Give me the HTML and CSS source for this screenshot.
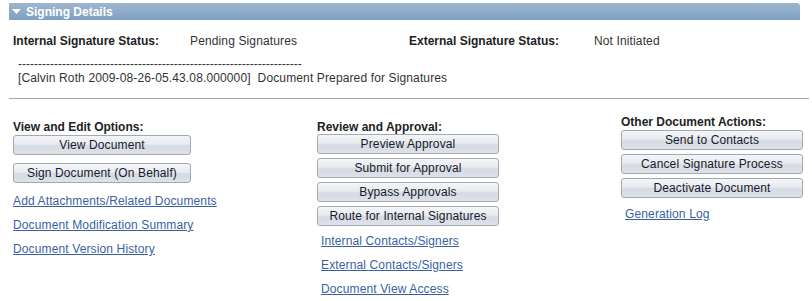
FILE: index.html
```html
<!DOCTYPE html>
<html>
<head>
<meta charset="utf-8">
<link rel="stylesheet" href="styles.css">
</head>
<body>
<div class="panel">
  <div class="header">
    <svg class="tri" width="9" height="6" viewBox="0 0 9 6"><polygon points="0,0 9,0 4.5,5" fill="#ffffff"/></svg>
    <span>Signing Details</span>
  </div>
  <div class="status">
    <span class="lbl c1">Internal Signature Status:</span>
    <span class="val c2">Pending Signatures</span>
    <span class="lbl c3">External Signature Status:</span>
    <span class="val c4">Not Initiated</span>
  </div>
  <div class="log">
    <div class="dashes">-----------------------------------------------------------------------</div>
    <div class="entry">[Calvin Roth 2009-08-26-05.43.08.000000]&nbsp; Document Prepared for Signatures</div>
  </div>
  <div class="rule"></div>
  <div class="actions">
    <div class="col col-a">
      <div class="lbl">View and Edit Options:</div>
      <div class="btns btns-wide">
        <button class="btn narrow">View Document</button>
        <button class="btn narrow">Sign Document (On Behalf)</button>
      </div>
      <div class="links">
        <a href="#">Add Attachments/Related Documents</a>
        <a href="#">Document Modification Summary</a>
        <a href="#">Document Version History</a>
      </div>
    </div>
    <div class="col col-b">
      <div class="lbl">Review and Approval:</div>
      <div class="btns">
        <button class="btn">Preview Approval</button>
        <button class="btn">Submit for Approval</button>
        <button class="btn">Bypass Approvals</button>
        <button class="btn">Route for Internal Signatures</button>
      </div>
      <div class="links indent">
        <a href="#">Internal Contacts/Signers</a>
        <a href="#">External Contacts/Signers</a>
        <a href="#">Document View Access</a>
      </div>
    </div>
    <div class="col col-c">
      <div class="lbl">Other Document Actions:</div>
      <div class="btns">
        <button class="btn">Send to Contacts</button>
        <button class="btn">Cancel Signature Process</button>
        <button class="btn">Deactivate Document</button>
      </div>
      <div class="links indent">
        <a href="#">Generation Log</a>
      </div>
    </div>
  </div>
</div>
</body>
</html>
```
FILE: styles.css
```css
html, body {
  margin: 0;
  padding: 0;
  background: #ffffff;
}
body {
  font-family: "Liberation Sans", Arial, sans-serif;
  font-size: 12px;
  letter-spacing: 0.13px;
  color: #222222;
}
.panel {
  padding-left: 9px;
  padding-top: 3px;
}
.header {
  width: 791px;
  height: 17px;
  background: linear-gradient(#9db7d0, #7f9fc0);
  border-top-right-radius: 3px;
  display: flex;
  align-items: center;
  color: #ffffff;
  font-weight: bold;
  font-size: 12px;
  letter-spacing: 0;
}
.tri {
  margin-left: 3px;
  margin-right: 5px;
  margin-top: 1px;
}
.status {
  display: flex;
  margin-top: 14px;
  line-height: 14px;
  height: 14px;
}
.lbl {
  font-weight: bold;
  color: #222222;
  line-height: 14px;
  letter-spacing: 0;
}
.val {
  color: #333333;
}
.c1 { margin-left: 4px; width: 177px; flex: none; }
.c2 { width: 219px; flex: none; }
.c3 { width: 185px; flex: none; }
.log {
  margin-top: 9px;
  padding-left: 9px;
  color: #333333;
}
.dashes {
  line-height: 14px;
  height: 14px;
  letter-spacing: 0;
}
.entry {
  line-height: 14px;
  margin-top: 0;
}
.rule {
  margin-top: 13px;
  width: 800px;
  height: 1px;
  background: #a5acb6;
}
.actions {
  display: flex;
  align-items: flex-start;
  padding-left: 4px;
}
.col {
  width: 304px;
  flex: none;
  display: flex;
  flex-direction: column;
  align-items: flex-start;
}
.col-c { width: 190px; }
.col-a { margin-top: 21px; }
.col-b { margin-top: 21px; }
.col-c { margin-top: 16px; }
.col-a .btns { margin-top: 1px; }
.col-b .btns { margin-top: 0; }
.col-c .btns { margin-top: 1px; }
.btns {
  display: flex;
  flex-direction: column;
  gap: 4px;
}
.btns-wide { gap: 8px; }
.btn {
  width: 182px;
  height: 20px;
  padding: 0;
  margin: 0;
  border: 1px solid #a3a8b1;
  border-radius: 3px;
  background: linear-gradient(#f3f5f8 0%, #e8ebf0 45%, #d6dbe3 55%, #dde1e8 100%);
  font-family: "Liberation Sans", Arial, sans-serif;
  font-size: 12px;
  letter-spacing: 0.13px;
  color: #1a1a2a;
  line-height: 18px;
  text-align: center;
}
.btn.narrow { width: 178px; }
.links {
  display: flex;
  flex-direction: column;
  gap: 10px;
}
.col-a .links { margin-top: 11px; }
.col-b .links { margin-top: 8px; }
.col-c .links { margin-top: 9px; }
.links.indent { padding-left: 4px; }
.links a {
  color: #3a5fa3;
  text-decoration: underline;
  line-height: 14px;
}
```
